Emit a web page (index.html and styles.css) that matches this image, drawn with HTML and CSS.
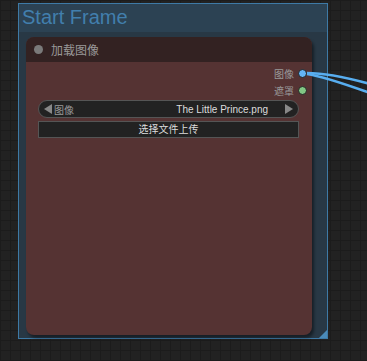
FILE: index.html
```
<!DOCTYPE HTML>
<html lang="zh-CN">
<head>
	<meta charset="UTF-8">
	<title>Start Frame</title>
	<link rel="stylesheet" href="styles.css">
</head>
<body>
	<div class="canvas">
		<div class="group">
			<div class="group_title">Start Frame</div>
			<div class="group_body">
				<div class="node">
					<div class="node_title">
						<span class="node_dot"></span>
						<span class="node_name">加载图像</span>
					</div>
					<div class="node_body">
						<div class="slot">
							<span class="slot_label">图像</span>
							<span class="slot_dot slot_image"></span>
						</div>
						<div class="slot">
							<span class="slot_label">遮罩</span>
							<span class="slot_dot slot_mask"></span>
						</div>
						<div class="combo">
							<span class="arrow arrow_left"></span>
							<span class="combo_label">图像</span>
							<span class="combo_value">The Little Prince.png</span>
							<span class="arrow arrow_right"></span>
						</div>
						<div class="button">选择文件上传</div>
					</div>
				</div>
				<!-- node end -->
			</div>
			<span class="resize"></span>
		</div>
		<!-- group end -->
		<svg class="links" width="367" height="361" viewBox="0 0 367 361">
			<path d="M307 73 C325 73, 345 77, 370 84" />
			<path d="M307 74 C322 76, 342 83, 370 93" />
		</svg>
	</div>
</body>
</html>
```

FILE: styles.css
```
html, body {
		margin:0;
		padding:0;
	}
body {
		width:367px;
		height:361px;
		overflow:hidden;
		background-color:#222;
		font-family:"Liberation Sans", "Noto Sans CJK SC", sans-serif;
	}
.canvas {
		position:relative;
		width:367px;
		height:361px;
		background-color:#222;
		background-image:
			linear-gradient(to right, #1c1c1c 1px, transparent 1px),
			linear-gradient(to bottom, #1c1c1c 1px, transparent 1px);
		background-size:10px 10px;
	}
.links {
		position:absolute;
		left:0;
		top:0;
		z-index:2;
	}
.links path {
		fill:none;
		stroke:#58aef0;
		stroke-width:2.5;
	}
.group {
		position:absolute;
		left:18px;
		top:3px;
		z-index:1;
		width:308px;
		height:334px;
		display:flex;
		flex-direction:column;
		background:#283845;
		border:1px solid #3e7aa6;
	}
.group_title {
		height:28px;
		padding-left:3px;
		background:#2c4253;
		color:#427fad;
		font-size:20px;
		line-height:26px;
	}
.group_body {
		flex:1;
		padding:5px 15px 3px 7px;
		display:flex;
	}
.node {
		flex:1;
		display:flex;
		flex-direction:column;
		background:#553333;
		border-radius:8px;
		box-shadow:2px 3px 3px rgba(0,0,0,0.45);
		overflow:hidden;
	}
.node_title {
		height:25px;
		display:flex;
		align-items:center;
		background:#332222;
		color:#999;
		font-size:12px;
	}
.node_dot {
		width:9px;
		height:9px;
		margin:0 8px 0 8px;
		border-radius:50%;
		background:#7a7a7a;
	}
.node_body {
		padding:3px 5px 0 12px;
		display:flex;
		flex-direction:column;
	}
.slot {
		height:17px;
		display:flex;
		align-items:center;
		justify-content:flex-end;
		color:#999;
		font-size:10px;
	}
.slot_label {
		margin-right:4px;
	}
.slot_dot {
		width:7px;
		height:7px;
		border-radius:50%;
		border:1px solid #222;
	}
.slot_image {
		background:#64b5f6;
	}
.slot_mask {
		background:#81c784;
	}
.combo {
		height:16px;
		margin:1px 8px 0 0;
		display:flex;
		align-items:center;
		background:#222;
		border:1px solid #555;
		border-radius:9px;
		font-size:10px;
		padding:0 5px;
	}
.combo_label {
		color:#999;
		margin-left:2px;
		flex:1;
	}
.combo_value {
		color:#ddd;
		margin-right:17px;
	}
.arrow {
		width:0;
		height:0;
		border-top:5px solid transparent;
		border-bottom:5px solid transparent;
	}
.arrow_left {
		border-right:8px solid #888;
	}
.arrow_right {
		border-left:8px solid #888;
	}
.button {
		height:15px;
		margin:3px 8px 0 0;
		background:#222;
		border:1px solid #555;
		color:#ddd;
		font-size:10px;
		line-height:15px;
		text-align:center;
	}
.resize {
		position:absolute;
		right:0;
		bottom:0;
		width:0;
		height:0;
		border-left:8px solid transparent;
		border-bottom:8px solid #4a8ab8;
	}
```
